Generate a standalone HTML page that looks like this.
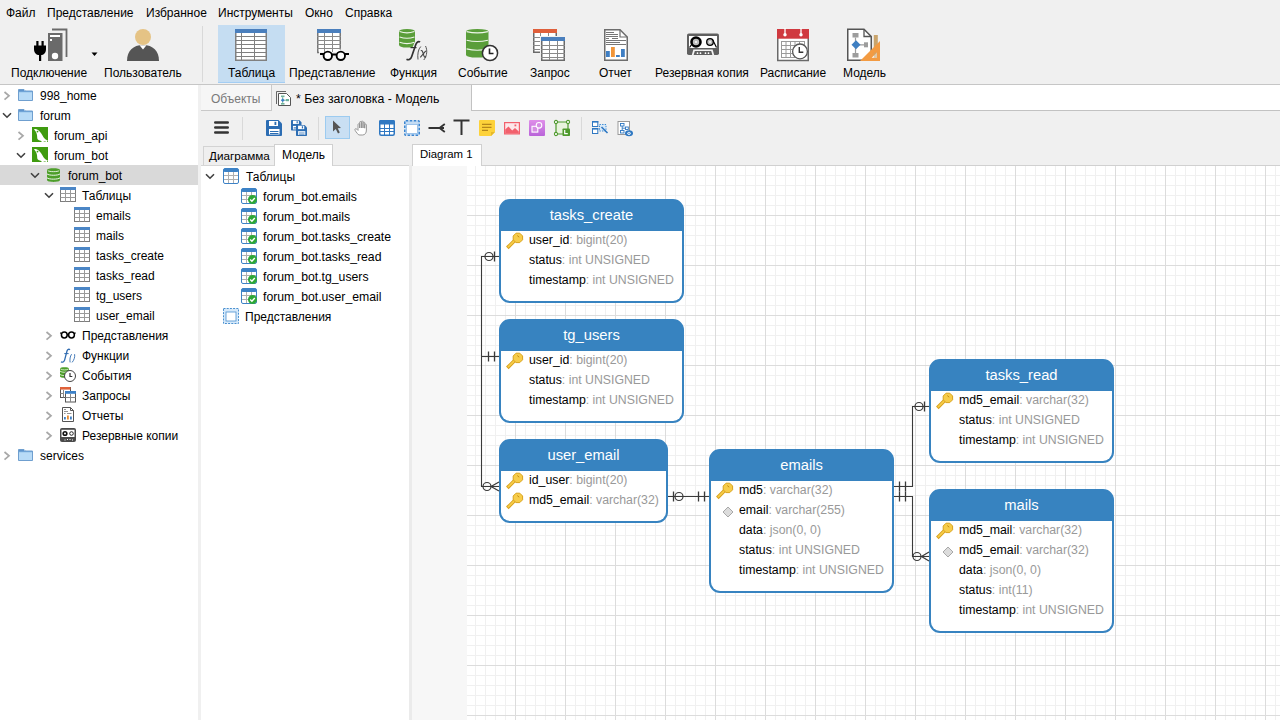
<!DOCTYPE html>
<html><head><meta charset="utf-8">
<style>
*{box-sizing:border-box}
html,body{margin:0;padding:0}
body{width:1280px;height:720px;overflow:hidden;position:relative;background:#f0f0f0;font-family:"Liberation Sans",sans-serif;font-size:12px;color:#000}
.a{position:absolute}
.t{position:absolute;white-space:nowrap;line-height:14px}
.menu .t{top:6px}
.tb .t{top:66px}
svg{position:absolute;overflow:visible}
.row{position:absolute;height:20px;line-height:20px;white-space:nowrap}
.er{position:absolute;border:2px solid #3783c0;border-radius:11px;background:#3783c0}
.er .b{position:absolute;left:0;right:0;top:30px;bottom:0;background:#fff;border-radius:0 0 9px 9px}
.er .h{position:absolute;left:0;right:0;top:0;height:30px;color:#fff;font-size:14.75px;text-align:center;line-height:28px}
.er .r{position:absolute;left:28px;height:20px;line-height:20px;font-size:12.3px;white-space:nowrap;color:#000}
.er .r i{font-style:normal;color:#999}
</style></head><body>

<!-- menu -->
<div class="menu">
<div class="t" style="left:6px">Файл</div>
<div class="t" style="left:47px">Представление</div>
<div class="t" style="left:146px">Избранное</div>
<div class="t" style="left:218px">Инструменты</div>
<div class="t" style="left:305px">Окно</div>
<div class="t" style="left:345px">Справка</div>
</div>

<!-- toolbar -->
<div class="a" style="left:218px;top:25px;width:67px;height:58px;background:#c5ddf2;border-bottom:1px solid #a3cdf3"></div>
<div class="a" style="left:202px;top:26px;width:1px;height:56px;background:#d9d9d9"></div>
<div class="tb">
<div class="t" style="left:11px">Подключение</div>
<div class="t" style="left:104px">Пользователь</div>
<div class="t" style="left:228px">Таблица</div>
<div class="t" style="left:289px">Представление</div>
<div class="t" style="left:390px">Функция</div>
<div class="t" style="left:458px">Событие</div>
<div class="t" style="left:530px">Запрос</div>
<div class="t" style="left:599px">Отчет</div>
<div class="t" style="left:655px">Резервная копия</div>
<div class="t" style="left:760px">Расписание</div>
<div class="t" style="left:843px">Модель</div>
</div>
<div class="a" style="left:0;top:84px;width:1280px;height:1px;background:#c6c6c6"></div>

<!-- left panel -->
<div class="a" style="left:0;top:85px;width:198px;height:635px;background:#fff"></div>
<div class="a" style="left:0;top:165px;width:198px;height:20px;background:#d9d9d9"></div>
<svg style="left:3px;top:91px" width="8" height="10" viewBox="0 0 8 10"><path d="M1.5 1 L6 4.8 L1.5 8.6" fill="none" stroke="#a8a8a8" stroke-width="1.7"/></svg>
<svg style="left:18px;top:88px" width="15" height="13" viewBox="0 0 15 13"><path d="M0.5 1.5 H6 L7.5 3 H14.5 V12.5 H0.5 Z" fill="#b8dbf7" stroke="#6f9fcf"/><rect x="1" y="2" width="5" height="1.5" fill="#5f95cd"/><rect x="1" y="3" width="13" height="1.2" fill="#6fa3d6"/></svg>
<div class="t" style="left:40px;top:89px;">998_home</div>
<svg style="left:2px;top:112px" width="10" height="7" viewBox="0 0 10 7"><path d="M1 1.2 L5 5.2 L9 1.2" fill="none" stroke="#404040" stroke-width="1.6"/></svg>
<svg style="left:18px;top:108px" width="15" height="13" viewBox="0 0 15 13"><path d="M0.5 1.5 H6 L7.5 3 H14.5 V12.5 H0.5 Z" fill="#b8dbf7" stroke="#6f9fcf"/><rect x="1" y="2" width="5" height="1.5" fill="#5f95cd"/><rect x="1" y="3" width="13" height="1.2" fill="#6fa3d6"/></svg>
<div class="t" style="left:40px;top:109px;">forum</div>
<svg style="left:17px;top:131px" width="8" height="10" viewBox="0 0 8 10"><path d="M1.5 1 L6 4.8 L1.5 8.6" fill="none" stroke="#a8a8a8" stroke-width="1.7"/></svg>
<svg style="left:32px;top:127px" width="16" height="15" viewBox="0 0 16 15"><rect x="0" y="0" width="16" height="15" fill="#3f9b0f"/><path d="M2 2.2 C3 1.6 4.5 2 6 3 C8.5 4.6 10 7.5 11.5 10.3 C12.5 12 14 12.8 16 13.6 L14.8 14.2 L15.6 15 H13.8 L13.2 14.3 L11 15 H9.8 C9.5 13.8 8 13.5 7 13.2 C5.8 12.8 5.2 12 5.2 10.5 C5.2 8.5 4.8 6.5 4 5 C3.4 4 2.6 3 2 2.2 Z" fill="#fff"/><circle cx="5.5" cy="4.6" r="0.9" fill="#3f9b0f"/></svg>
<div class="t" style="left:54px;top:129px;">forum_api</div>
<svg style="left:16px;top:152px" width="10" height="7" viewBox="0 0 10 7"><path d="M1 1.2 L5 5.2 L9 1.2" fill="none" stroke="#404040" stroke-width="1.6"/></svg>
<svg style="left:32px;top:147px" width="16" height="15" viewBox="0 0 16 15"><rect x="0" y="0" width="16" height="15" fill="#3f9b0f"/><path d="M2 2.2 C3 1.6 4.5 2 6 3 C8.5 4.6 10 7.5 11.5 10.3 C12.5 12 14 12.8 16 13.6 L14.8 14.2 L15.6 15 H13.8 L13.2 14.3 L11 15 H9.8 C9.5 13.8 8 13.5 7 13.2 C5.8 12.8 5.2 12 5.2 10.5 C5.2 8.5 4.8 6.5 4 5 C3.4 4 2.6 3 2 2.2 Z" fill="#fff"/><circle cx="5.5" cy="4.6" r="0.9" fill="#3f9b0f"/></svg>
<div class="t" style="left:54px;top:149px;">forum_bot</div>
<svg style="left:30px;top:172px" width="10" height="7" viewBox="0 0 10 7"><path d="M1 1.2 L5 5.2 L9 1.2" fill="none" stroke="#404040" stroke-width="1.6"/></svg>
<svg style="left:47px;top:168px" width="13" height="14" viewBox="0 0 13 14"><path d="M0 2 C0 -0.5 13 -0.5 13 2 V12 C13 14.5 0 14.5 0 12 Z" fill="#4d9e2a"/><path d="M0.8 2.6 C2 4 11 4 12.2 2.6" fill="none" stroke="#fff" stroke-width="0.9" opacity="0.9"/><path d="M0 5.9 C2 7.7 11 7.7 13 5.9" fill="none" stroke="#fff" stroke-width="0.9"/><path d="M0 9.8 C2 11.6 11 11.6 13 9.8" fill="none" stroke="#fff" stroke-width="0.9"/></svg>
<div class="t" style="left:68px;top:169px;">forum_bot</div>
<svg style="left:44px;top:192px" width="10" height="7" viewBox="0 0 10 7"><path d="M1 1.2 L5 5.2 L9 1.2" fill="none" stroke="#404040" stroke-width="1.6"/></svg>
<svg style="left:60px;top:187px" width="16" height="15" viewBox="0 0 16 15"><rect x="0.5" y="0.5" width="15" height="14" fill="#fff" stroke="#7d7d7d"/><rect x="0" y="0" width="16" height="3" fill="#4b86c6"/><path d="M5.5 3 V14.5 M10.5 3 V14.5 M0.5 6.5 H15.5 M0.5 10.5 H15.5" stroke="#9a9a9a" stroke-width="1"/></svg>
<div class="t" style="left:82px;top:189px;">Таблицы</div>
<svg style="left:74px;top:207px" width="16" height="15" viewBox="0 0 16 15"><rect x="0.5" y="0.5" width="15" height="14" fill="#fff" stroke="#7d7d7d"/><rect x="0" y="0" width="16" height="3" fill="#4b86c6"/><path d="M5.5 3 V14.5 M10.5 3 V14.5 M0.5 6.5 H15.5 M0.5 10.5 H15.5" stroke="#9a9a9a" stroke-width="1"/></svg>
<div class="t" style="left:96px;top:209px;">emails</div>
<svg style="left:74px;top:227px" width="16" height="15" viewBox="0 0 16 15"><rect x="0.5" y="0.5" width="15" height="14" fill="#fff" stroke="#7d7d7d"/><rect x="0" y="0" width="16" height="3" fill="#4b86c6"/><path d="M5.5 3 V14.5 M10.5 3 V14.5 M0.5 6.5 H15.5 M0.5 10.5 H15.5" stroke="#9a9a9a" stroke-width="1"/></svg>
<div class="t" style="left:96px;top:229px;">mails</div>
<svg style="left:74px;top:247px" width="16" height="15" viewBox="0 0 16 15"><rect x="0.5" y="0.5" width="15" height="14" fill="#fff" stroke="#7d7d7d"/><rect x="0" y="0" width="16" height="3" fill="#4b86c6"/><path d="M5.5 3 V14.5 M10.5 3 V14.5 M0.5 6.5 H15.5 M0.5 10.5 H15.5" stroke="#9a9a9a" stroke-width="1"/></svg>
<div class="t" style="left:96px;top:249px;">tasks_create</div>
<svg style="left:74px;top:267px" width="16" height="15" viewBox="0 0 16 15"><rect x="0.5" y="0.5" width="15" height="14" fill="#fff" stroke="#7d7d7d"/><rect x="0" y="0" width="16" height="3" fill="#4b86c6"/><path d="M5.5 3 V14.5 M10.5 3 V14.5 M0.5 6.5 H15.5 M0.5 10.5 H15.5" stroke="#9a9a9a" stroke-width="1"/></svg>
<div class="t" style="left:96px;top:269px;">tasks_read</div>
<svg style="left:74px;top:287px" width="16" height="15" viewBox="0 0 16 15"><rect x="0.5" y="0.5" width="15" height="14" fill="#fff" stroke="#7d7d7d"/><rect x="0" y="0" width="16" height="3" fill="#4b86c6"/><path d="M5.5 3 V14.5 M10.5 3 V14.5 M0.5 6.5 H15.5 M0.5 10.5 H15.5" stroke="#9a9a9a" stroke-width="1"/></svg>
<div class="t" style="left:96px;top:289px;">tg_users</div>
<svg style="left:74px;top:307px" width="16" height="15" viewBox="0 0 16 15"><rect x="0.5" y="0.5" width="15" height="14" fill="#fff" stroke="#7d7d7d"/><rect x="0" y="0" width="16" height="3" fill="#4b86c6"/><path d="M5.5 3 V14.5 M10.5 3 V14.5 M0.5 6.5 H15.5 M0.5 10.5 H15.5" stroke="#9a9a9a" stroke-width="1"/></svg>
<div class="t" style="left:96px;top:309px;">user_email</div>
<svg style="left:45px;top:331px" width="8" height="10" viewBox="0 0 8 10"><path d="M1.5 1 L6 4.8 L1.5 8.6" fill="none" stroke="#a8a8a8" stroke-width="1.7"/></svg>
<svg style="left:60px;top:331px" width="16" height="8" viewBox="0 0 16 8"><circle cx="4.3" cy="4" r="2.9" fill="#fff" stroke="#000" stroke-width="1.5"/><circle cx="11.5" cy="4" r="2.9" fill="#fff" stroke="#000" stroke-width="1.5"/><path d="M7 3.6 H8.8 M0.2 1.8 L1.8 2.8 M15.6 1.8 L14 2.8" stroke="#000" stroke-width="1.3"/></svg>
<div class="t" style="left:82px;top:329px;">Представления</div>
<svg style="left:45px;top:351px" width="8" height="10" viewBox="0 0 8 10"><path d="M1.5 1 L6 4.8 L1.5 8.6" fill="none" stroke="#a8a8a8" stroke-width="1.7"/></svg>
<svg style="left:60px;top:347px" width="17" height="17" viewBox="0 0 17 17"><path d="M10 2.8 C9 1.8 7.5 2.2 7 4 L4.6 13.2 C4.1 15 2.6 15.6 1 14.8" fill="none" stroke="#2f6bb0" stroke-width="1.3"/><path d="M4.3 6.6 H8.6" stroke="#2f6bb0" stroke-width="1"/><path d="M11.6 7.2 C10.1 9.2 9.6 12.5 10.1 15.4 M14.6 7.2 C15.1 10 14.1 13 12.1 15.4" fill="none" stroke="#2f6bb0" stroke-width="0.9"/></svg>
<div class="t" style="left:82px;top:349px;">Функции</div>
<svg style="left:45px;top:371px" width="8" height="10" viewBox="0 0 8 10"><path d="M1.5 1 L6 4.8 L1.5 8.6" fill="none" stroke="#a8a8a8" stroke-width="1.7"/></svg>
<svg style="left:60px;top:367px" width="16" height="16" viewBox="0 0 16 16"><g transform="translate(0,0)"><path d="M0 1.5 C0 -0.3 9 -0.3 9 1.5 V9.5 C9 11.3 0 11.3 0 9.5 Z" fill="#4d9e2a"/><path d="M0 4.2 C2 5.7 7 5.7 9 4.2 M0 7.5 C2 9.0 7 9.0 9 7.5 M0.5 2 C2 3.2 7 3.2 8.5 2" fill="none" stroke="#e8f5e0" stroke-width="0.8"/></g><circle cx="10" cy="9" r="5.5" fill="#fff" stroke="#444" stroke-width="1"/><path d="M10 6 V9.5 H12.3" fill="none" stroke="#333" stroke-width="1.2"/></svg>
<div class="t" style="left:82px;top:369px;">События</div>
<svg style="left:45px;top:391px" width="8" height="10" viewBox="0 0 8 10"><path d="M1.5 1 L6 4.8 L1.5 8.6" fill="none" stroke="#a8a8a8" stroke-width="1.7"/></svg>
<svg style="left:60px;top:387px" width="16" height="16" viewBox="0 0 16 16"><rect x="0.5" y="0.5" width="10" height="10" fill="#fff" stroke="#555"/><rect x="0" y="0" width="10.5" height="2.6" fill="#e0623a"/><path d="M3.5 3 V10.5 M0.5 6.5 H4" stroke="#888"/><rect x="5.5" y="4.5" width="10" height="10.5" fill="#fff" stroke="#555"/><rect x="5" y="4" width="11" height="2.8" fill="#3e82c8"/><path d="M10.5 7 V15 M5.5 10.5 H15.5" stroke="#888"/></svg>
<div class="t" style="left:82px;top:389px;">Запросы</div>
<svg style="left:45px;top:411px" width="8" height="10" viewBox="0 0 8 10"><path d="M1.5 1 L6 4.8 L1.5 8.6" fill="none" stroke="#a8a8a8" stroke-width="1.7"/></svg>
<svg style="left:62px;top:407px" width="12" height="15" viewBox="0 0 12 15"><path d="M0.5 0.5 H8.5 L11.5 3.5 V14.5 H0.5 Z" fill="#fff" stroke="#555"/><path d="M8.5 0.5 V3.5 H11.5" fill="none" stroke="#555"/><path d="M2 2.5 H4 M2 4.5 H6 M2 6.5 H3.5 M5 6.5 H9.5" stroke="#777" stroke-width="0.8"/><rect x="2" y="10" width="1.8" height="2.5" fill="#3f7fc4"/><rect x="5" y="8.5" width="1.8" height="4" fill="#e88b2f"/><rect x="8" y="9.5" width="1.8" height="3" fill="#3f7fc4"/></svg>
<div class="t" style="left:82px;top:409px;">Отчеты</div>
<svg style="left:45px;top:431px" width="8" height="10" viewBox="0 0 8 10"><path d="M1.5 1 L6 4.8 L1.5 8.6" fill="none" stroke="#a8a8a8" stroke-width="1.7"/></svg>
<svg style="left:60px;top:428px" width="16" height="14" viewBox="0 0 16 14"><rect x="0" y="0" width="16" height="14" rx="2" fill="#4a4a4a"/><rect x="1.5" y="1.8" width="13" height="7.2" fill="#fff"/><circle cx="5" cy="5.5" r="2.6" fill="#111"/><circle cx="5" cy="5.5" r="1" fill="#fff"/><circle cx="11.5" cy="5.5" r="1.8" fill="none" stroke="#111" stroke-width="0.9"/><path d="M4.5 12 h1 M7 11.5 h1 M9.5 11.5 h1 M12 12 h1" stroke="#fff" stroke-width="1"/></svg>
<div class="t" style="left:82px;top:429px;">Резервные копии</div>
<svg style="left:3px;top:451px" width="8" height="10" viewBox="0 0 8 10"><path d="M1.5 1 L6 4.8 L1.5 8.6" fill="none" stroke="#a8a8a8" stroke-width="1.7"/></svg>
<svg style="left:18px;top:448px" width="15" height="13" viewBox="0 0 15 13"><path d="M0.5 1.5 H6 L7.5 3 H14.5 V12.5 H0.5 Z" fill="#b8dbf7" stroke="#6f9fcf"/><rect x="1" y="2" width="5" height="1.5" fill="#5f95cd"/><rect x="1" y="3" width="13" height="1.2" fill="#6fa3d6"/></svg>
<div class="t" style="left:40px;top:449px;">services</div>


<!-- doc tabs -->
<div class="a" style="left:201px;top:85px;width:71px;height:26px;background:#f6f6f6;border-right:1px solid #c9c9c9;border-bottom:1px solid #c9c9c9"></div>
<div class="t" style="left:211px;top:92px;color:#7a7a7a">Объекты</div>
<div class="t" style="left:296px;top:92px;font-size:12.3px">* Без заголовка - Модель</div>
<div class="a" style="left:471px;top:85px;width:809px;height:26px;background:#fff;border-left:1px solid #c2c2c2;border-bottom:1px solid #c2c2c2"></div>

<!-- model toolbar -->
<div class="a" style="left:242px;top:117px;width:1px;height:23px;background:#d9d9d9"></div>
<div class="a" style="left:318px;top:117px;width:1px;height:23px;background:#d9d9d9"></div>
<div class="a" style="left:581px;top:117px;width:1px;height:23px;background:#d9d9d9"></div>
<div class="a" style="left:325px;top:116px;width:25px;height:23px;background:#c9dff3;border:1px solid #9ccbf0"></div>

<!-- sub tabs -->
<div class="a" style="left:201px;top:165px;width:208px;height:1px;background:#d6d6d6"></div>
<div class="a" style="left:203px;top:146px;width:72px;height:19px;background:#efefef;border:1px solid #d3d3d3;border-bottom:none"></div>
<div class="t" style="left:209px;top:149px;font-size:11.7px">Диаграмма</div>
<div class="a" style="left:274px;top:144px;width:59px;height:22px;background:#fff;border:1px solid #d0d0d0;border-bottom:none"></div>
<div class="t" style="left:282px;top:148px">Модель</div>
<div class="a" style="left:201px;top:166px;width:208px;height:554px;background:#fff"></div>

<div class="a" style="left:409px;top:165px;width:3px;height:555px;background:#ebebeb"></div>
<div class="a" style="left:412px;top:165px;width:55px;height:555px;background:#f7f7f7"></div>
<div class="a" style="left:412px;top:144px;width:70px;height:22px;background:#fff;border:1px solid #d0d0d0;border-bottom:none"></div>
<div class="t" style="left:420px;top:147px;font-size:11.4px">Diagram 1</div>
<div class="a" style="left:481px;top:165px;width:799px;height:1px;background:#d0d0d0"></div>

<!-- grid -->
<svg class="a" style="left:467px;top:166px" width="813" height="554">
<defs>
<pattern id="mi" x="-2" y="-1" width="10" height="10" patternUnits="userSpaceOnUse"><rect x="0" y="0" width="10" height="10" fill="#fff"/><rect x="0" y="0" width="1" height="10" fill="#f0f0f0"/><rect x="0" y="0" width="10" height="1" fill="#f0f0f0"/></pattern>
<pattern id="ma" x="-2" y="-1" width="50" height="50" patternUnits="userSpaceOnUse"><rect x="0" y="0" width="1" height="50" fill="#dcdcdc"/><rect x="0" y="0" width="50" height="1" fill="#dcdcdc"/></pattern>
</defs>
<rect width="813" height="554" fill="url(#mi)"/>
<rect width="813" height="554" fill="url(#ma)"/>
</svg>

<div class="er" style="left:499px;top:199px;width:185px;height:104px"><div class="h">tasks_create</div><div class="b"></div><div class="r" style="top:29px">user_id<i>: bigint(20)</i></div><div class="r" style="top:49px">status<i>: int UNSIGNED</i></div><div class="r" style="top:69px">timestamp<i>: int UNSIGNED</i></div></div>
<svg style="left:507px;top:232px" width="17" height="17" viewBox="0 0 17 17"><path d="M1.6 14.6 L7.6 8.6" stroke="#d9a21c" stroke-width="3.6" stroke-linecap="square"/><path d="M1.6 14.6 L7.6 8.6" stroke="#f7cd4a" stroke-width="1.8" stroke-linecap="square"/><path d="M9 1.2 H12.8 L15.6 4 V7.8 L12.8 10.6 H9 L6.2 7.8 V4 Z" fill="#f7cd4a" stroke="#d9a21c" stroke-width="1"/><path d="M10.3 3.6 L12.2 5.2" stroke="#c48c14" stroke-width="1"/></svg>
<div class="er" style="left:499px;top:319px;width:185px;height:104px"><div class="h">tg_users</div><div class="b"></div><div class="r" style="top:29px">user_id<i>: bigint(20)</i></div><div class="r" style="top:49px">status<i>: int UNSIGNED</i></div><div class="r" style="top:69px">timestamp<i>: int UNSIGNED</i></div></div>
<svg style="left:507px;top:352px" width="17" height="17" viewBox="0 0 17 17"><path d="M1.6 14.6 L7.6 8.6" stroke="#d9a21c" stroke-width="3.6" stroke-linecap="square"/><path d="M1.6 14.6 L7.6 8.6" stroke="#f7cd4a" stroke-width="1.8" stroke-linecap="square"/><path d="M9 1.2 H12.8 L15.6 4 V7.8 L12.8 10.6 H9 L6.2 7.8 V4 Z" fill="#f7cd4a" stroke="#d9a21c" stroke-width="1"/><path d="M10.3 3.6 L12.2 5.2" stroke="#c48c14" stroke-width="1"/></svg>
<div class="er" style="left:499px;top:439px;width:169px;height:84px"><div class="h">user_email</div><div class="b"></div><div class="r" style="top:29px">id_user<i>: bigint(20)</i></div><div class="r" style="top:49px">md5_email<i>: varchar(32)</i></div></div>
<svg style="left:507px;top:472px" width="17" height="17" viewBox="0 0 17 17"><path d="M1.6 14.6 L7.6 8.6" stroke="#d9a21c" stroke-width="3.6" stroke-linecap="square"/><path d="M1.6 14.6 L7.6 8.6" stroke="#f7cd4a" stroke-width="1.8" stroke-linecap="square"/><path d="M9 1.2 H12.8 L15.6 4 V7.8 L12.8 10.6 H9 L6.2 7.8 V4 Z" fill="#f7cd4a" stroke="#d9a21c" stroke-width="1"/><path d="M10.3 3.6 L12.2 5.2" stroke="#c48c14" stroke-width="1"/></svg>
<svg style="left:507px;top:492px" width="17" height="17" viewBox="0 0 17 17"><path d="M1.6 14.6 L7.6 8.6" stroke="#d9a21c" stroke-width="3.6" stroke-linecap="square"/><path d="M1.6 14.6 L7.6 8.6" stroke="#f7cd4a" stroke-width="1.8" stroke-linecap="square"/><path d="M9 1.2 H12.8 L15.6 4 V7.8 L12.8 10.6 H9 L6.2 7.8 V4 Z" fill="#f7cd4a" stroke="#d9a21c" stroke-width="1"/><path d="M10.3 3.6 L12.2 5.2" stroke="#c48c14" stroke-width="1"/></svg>
<div class="er" style="left:709px;top:449px;width:185px;height:144px"><div class="h">emails</div><div class="b"></div><div class="r" style="top:29px">md5<i>: varchar(32)</i></div><div class="r" style="top:49px">email<i>: varchar(255)</i></div><div class="r" style="top:69px">data<i>: json(0, 0)</i></div><div class="r" style="top:89px">status<i>: int UNSIGNED</i></div><div class="r" style="top:109px">timestamp<i>: int UNSIGNED</i></div></div>
<svg style="left:717px;top:482px" width="17" height="17" viewBox="0 0 17 17"><path d="M1.6 14.6 L7.6 8.6" stroke="#d9a21c" stroke-width="3.6" stroke-linecap="square"/><path d="M1.6 14.6 L7.6 8.6" stroke="#f7cd4a" stroke-width="1.8" stroke-linecap="square"/><path d="M9 1.2 H12.8 L15.6 4 V7.8 L12.8 10.6 H9 L6.2 7.8 V4 Z" fill="#f7cd4a" stroke="#d9a21c" stroke-width="1"/><path d="M10.3 3.6 L12.2 5.2" stroke="#c48c14" stroke-width="1"/></svg>
<svg style="left:722px;top:506px" width="12" height="12" viewBox="0 0 12 12"><path d="M6 1 L11 6 L6 11 L1 6 Z" fill="#dcdcdc" stroke="#a8a8a8"/></svg>
<div class="er" style="left:929px;top:359px;width:185px;height:104px"><div class="h">tasks_read</div><div class="b"></div><div class="r" style="top:29px">md5_email<i>: varchar(32)</i></div><div class="r" style="top:49px">status<i>: int UNSIGNED</i></div><div class="r" style="top:69px">timestamp<i>: int UNSIGNED</i></div></div>
<svg style="left:937px;top:392px" width="17" height="17" viewBox="0 0 17 17"><path d="M1.6 14.6 L7.6 8.6" stroke="#d9a21c" stroke-width="3.6" stroke-linecap="square"/><path d="M1.6 14.6 L7.6 8.6" stroke="#f7cd4a" stroke-width="1.8" stroke-linecap="square"/><path d="M9 1.2 H12.8 L15.6 4 V7.8 L12.8 10.6 H9 L6.2 7.8 V4 Z" fill="#f7cd4a" stroke="#d9a21c" stroke-width="1"/><path d="M10.3 3.6 L12.2 5.2" stroke="#c48c14" stroke-width="1"/></svg>
<div class="er" style="left:929px;top:489px;width:185px;height:144px"><div class="h">mails</div><div class="b"></div><div class="r" style="top:29px">md5_mail<i>: varchar(32)</i></div><div class="r" style="top:49px">md5_email<i>: varchar(32)</i></div><div class="r" style="top:69px">data<i>: json(0, 0)</i></div><div class="r" style="top:89px">status<i>: int(11)</i></div><div class="r" style="top:109px">timestamp<i>: int UNSIGNED</i></div></div>
<svg style="left:937px;top:522px" width="17" height="17" viewBox="0 0 17 17"><path d="M1.6 14.6 L7.6 8.6" stroke="#d9a21c" stroke-width="3.6" stroke-linecap="square"/><path d="M1.6 14.6 L7.6 8.6" stroke="#f7cd4a" stroke-width="1.8" stroke-linecap="square"/><path d="M9 1.2 H12.8 L15.6 4 V7.8 L12.8 10.6 H9 L6.2 7.8 V4 Z" fill="#f7cd4a" stroke="#d9a21c" stroke-width="1"/><path d="M10.3 3.6 L12.2 5.2" stroke="#c48c14" stroke-width="1"/></svg>
<svg style="left:942px;top:546px" width="12" height="12" viewBox="0 0 12 12"><path d="M6 1 L11 6 L6 11 L1 6 Z" fill="#dcdcdc" stroke="#a8a8a8"/></svg>
<svg style="left:0;top:0" width="1280" height="720"><polyline points="499,256.5 481.5,256.5 481.5,486.5 499,486.5" fill="none" stroke="#3a3a3a" stroke-width="1.1"/><polyline points="481.5,356.5 499,356.5" fill="none" stroke="#3a3a3a" stroke-width="1.1"/><circle cx="489" cy="256.5" r="4" fill="none" stroke="#3a3a3a" stroke-width="1.2"/><path d="M494.5 251.5 V261.5" stroke="#3a3a3a" stroke-width="1.3"/><path d="M488.5 351.5 V361.5" stroke="#3a3a3a" stroke-width="1.3"/><path d="M494.5 351.5 V361.5" stroke="#3a3a3a" stroke-width="1.3"/><circle cx="487" cy="486.5" r="4" fill="none" stroke="#3a3a3a" stroke-width="1.2"/><path d="M499 482.0 L491 486.5 L499 491.0" fill="none" stroke="#3a3a3a" stroke-width="1.2"/><polyline points="668,496.5 709,496.5" fill="none" stroke="#3a3a3a" stroke-width="1.1"/><path d="M673.5 491.5 V501.5" stroke="#3a3a3a" stroke-width="1.3"/><circle cx="679" cy="496.5" r="4" fill="none" stroke="#3a3a3a" stroke-width="1.2"/><path d="M698.5 491.5 V501.5" stroke="#3a3a3a" stroke-width="1.3"/><path d="M704.5 491.5 V501.5" stroke="#3a3a3a" stroke-width="1.3"/><polyline points="894,486.5 912.5,486.5 912.5,406.5 929,406.5" fill="none" stroke="#3a3a3a" stroke-width="1.1"/><path d="M899.5 481.5 V491.5" stroke="#3a3a3a" stroke-width="1.3"/><path d="M905.5 481.5 V491.5" stroke="#3a3a3a" stroke-width="1.3"/><circle cx="919" cy="406.5" r="4" fill="none" stroke="#3a3a3a" stroke-width="1.2"/><path d="M924.5 401.5 V411.5" stroke="#3a3a3a" stroke-width="1.3"/><polyline points="894,496.5 912.5,496.5 912.5,556.5 929,556.5" fill="none" stroke="#3a3a3a" stroke-width="1.1"/><path d="M899.5 491.5 V501.5" stroke="#3a3a3a" stroke-width="1.3"/><path d="M905.5 491.5 V501.5" stroke="#3a3a3a" stroke-width="1.3"/><circle cx="917" cy="556.5" r="4" fill="none" stroke="#3a3a3a" stroke-width="1.2"/><path d="M929 552.0 L921.5 556.5 L929 561.0" fill="none" stroke="#3a3a3a" stroke-width="1.2"/></svg>

<svg style="left:205px;top:173px" width="10" height="7" viewBox="0 0 10 7"><path d="M1 1.2 L5 5.2 L9 1.2" fill="none" stroke="#404040" stroke-width="1.6"/></svg>
<svg style="left:223px;top:168px" width="16" height="16" viewBox="0 0 16 16"><rect x="0.5" y="0.5" width="15" height="15" rx="1.5" fill="#fff" stroke="#3d82c6"/><rect x="0.5" y="0.5" width="15" height="3.5" rx="1.5" fill="#3d82c6"/><path d="M5.5 4 V15 M10.5 4 V15 M1 7.5 H15 M1 11.5 H15" stroke="#b0b0b0" stroke-width="1"/></svg>
<div class="t" style="left:246px;top:170px;">Таблицы</div>
<svg style="left:241px;top:188px" width="16" height="16" viewBox="0 0 16 16"><rect x="0.5" y="0.5" width="15" height="15" rx="1.5" fill="#fff" stroke="#3d82c6"/><rect x="0.5" y="0.5" width="15" height="3.5" rx="1.5" fill="#3d82c6"/><path d="M5.5 4 V15 M10.5 4 V15 M1 7.5 H15 M1 11.5 H15" stroke="#b0b0b0" stroke-width="1"/><circle cx="11.5" cy="11.5" r="4.5" fill="#2ea836"/><path d="M9.2 11.6 L10.9 13.2 L13.8 10.1" fill="none" stroke="#fff" stroke-width="1.4"/></svg>
<div class="t" style="left:263px;top:190px;font-size:12.25px;">forum_bot.emails</div>
<svg style="left:241px;top:208px" width="16" height="16" viewBox="0 0 16 16"><rect x="0.5" y="0.5" width="15" height="15" rx="1.5" fill="#fff" stroke="#3d82c6"/><rect x="0.5" y="0.5" width="15" height="3.5" rx="1.5" fill="#3d82c6"/><path d="M5.5 4 V15 M10.5 4 V15 M1 7.5 H15 M1 11.5 H15" stroke="#b0b0b0" stroke-width="1"/><circle cx="11.5" cy="11.5" r="4.5" fill="#2ea836"/><path d="M9.2 11.6 L10.9 13.2 L13.8 10.1" fill="none" stroke="#fff" stroke-width="1.4"/></svg>
<div class="t" style="left:263px;top:210px;font-size:12.25px;">forum_bot.mails</div>
<svg style="left:241px;top:228px" width="16" height="16" viewBox="0 0 16 16"><rect x="0.5" y="0.5" width="15" height="15" rx="1.5" fill="#fff" stroke="#3d82c6"/><rect x="0.5" y="0.5" width="15" height="3.5" rx="1.5" fill="#3d82c6"/><path d="M5.5 4 V15 M10.5 4 V15 M1 7.5 H15 M1 11.5 H15" stroke="#b0b0b0" stroke-width="1"/><circle cx="11.5" cy="11.5" r="4.5" fill="#2ea836"/><path d="M9.2 11.6 L10.9 13.2 L13.8 10.1" fill="none" stroke="#fff" stroke-width="1.4"/></svg>
<div class="t" style="left:263px;top:230px;font-size:12.25px;">forum_bot.tasks_create</div>
<svg style="left:241px;top:248px" width="16" height="16" viewBox="0 0 16 16"><rect x="0.5" y="0.5" width="15" height="15" rx="1.5" fill="#fff" stroke="#3d82c6"/><rect x="0.5" y="0.5" width="15" height="3.5" rx="1.5" fill="#3d82c6"/><path d="M5.5 4 V15 M10.5 4 V15 M1 7.5 H15 M1 11.5 H15" stroke="#b0b0b0" stroke-width="1"/><circle cx="11.5" cy="11.5" r="4.5" fill="#2ea836"/><path d="M9.2 11.6 L10.9 13.2 L13.8 10.1" fill="none" stroke="#fff" stroke-width="1.4"/></svg>
<div class="t" style="left:263px;top:250px;font-size:12.25px;">forum_bot.tasks_read</div>
<svg style="left:241px;top:268px" width="16" height="16" viewBox="0 0 16 16"><rect x="0.5" y="0.5" width="15" height="15" rx="1.5" fill="#fff" stroke="#3d82c6"/><rect x="0.5" y="0.5" width="15" height="3.5" rx="1.5" fill="#3d82c6"/><path d="M5.5 4 V15 M10.5 4 V15 M1 7.5 H15 M1 11.5 H15" stroke="#b0b0b0" stroke-width="1"/><circle cx="11.5" cy="11.5" r="4.5" fill="#2ea836"/><path d="M9.2 11.6 L10.9 13.2 L13.8 10.1" fill="none" stroke="#fff" stroke-width="1.4"/></svg>
<div class="t" style="left:263px;top:270px;font-size:12.25px;">forum_bot.tg_users</div>
<svg style="left:241px;top:288px" width="16" height="16" viewBox="0 0 16 16"><rect x="0.5" y="0.5" width="15" height="15" rx="1.5" fill="#fff" stroke="#3d82c6"/><rect x="0.5" y="0.5" width="15" height="3.5" rx="1.5" fill="#3d82c6"/><path d="M5.5 4 V15 M10.5 4 V15 M1 7.5 H15 M1 11.5 H15" stroke="#b0b0b0" stroke-width="1"/><circle cx="11.5" cy="11.5" r="4.5" fill="#2ea836"/><path d="M9.2 11.6 L10.9 13.2 L13.8 10.1" fill="none" stroke="#fff" stroke-width="1.4"/></svg>
<div class="t" style="left:263px;top:290px;font-size:12.25px;">forum_bot.user_email</div>
<svg style="left:223px;top:308px" width="16" height="16" viewBox="0 0 16 16"><rect x="0.5" y="0.5" width="15" height="15" fill="#d6e9fa" stroke="#4a90d0" stroke-dasharray="2 1.2"/><rect x="3" y="4" width="10" height="9" fill="#fff" stroke="#4a90d0" stroke-width="0.8"/></svg>
<div class="t" style="left:245px;top:310px;">Представления</div>
<svg style="left:33px;top:28px" width="36" height="36" viewBox="0 0 36 36"><path d="M19 1.5 H33.5 V29" fill="none" stroke="#6a6a6a" stroke-width="1.8"/><rect x="15" y="5" width="14.5" height="28" fill="#6a6a6a"/><rect x="17" y="7" width="10" height="2" fill="#fff"/><rect x="17" y="11" width="2" height="2" fill="#fff"/><circle cx="22" cy="28" r="3.2" fill="#fff"/><rect x="3.3" y="13" width="2.2" height="5" fill="#000"/><rect x="8.5" y="13" width="2.2" height="5" fill="#000"/><path d="M1 17.5 H13 V21 C13 25 10.5 27 8 27 H6 C3.5 27 1 25 1 21 Z" fill="#000"/><rect x="6" y="26" width="2.2" height="7" fill="#000"/></svg>
<svg style="left:91px;top:52px" width="7" height="5" viewBox="0 0 7 5"><path d="M0.5 0.5 H6.5 L3.5 4 Z" fill="#000"/></svg>
<svg style="left:126px;top:28px" width="34" height="34" viewBox="0 0 34 34"><circle cx="17" cy="9" r="8" fill="#e5c385"/><path d="M1 33 C1 23 7 17 17 17 C27 17 33 23 33 33 Z" fill="#555"/><path d="M13.5 17.3 L17 21.5 L20.5 17.3 Z" fill="#fff"/></svg>
<svg style="left:202px;top:26px" width="1" height="56" viewBox="0 0 1 56"></svg>
<svg style="left:235px;top:29px" width="32" height="32" viewBox="0 0 32 32"><rect x="0" y="0" width="32" height="32" fill="#808080"/><rect x="1.5" y="4" width="29" height="26.5" fill="#fff"/><rect x="0" y="0" width="32" height="4" fill="#4a7fbd"/><path d="M0 7.5 H32 M0 11.5 H32 M0 15.5 H32 M0 19.5 H32 M0 23.5 H32 M0 27.5 H32 M6.5 4 V32 M19.5 4 V32 " stroke="#808080" stroke-width="1"/></svg>
<svg style="left:317px;top:29px" width="34" height="34" viewBox="0 0 34 34"><rect x="0" y="0" width="24" height="4" fill="#4a7fbd"/><rect x="0.5" y="4" width="23" height="19" fill="#fff"/><path d="M0.75 4 V23.5 H2 M23.25 4 V20.5" fill="none" stroke="#777" stroke-width="1.5"/><path d="M0 7.5 H24 M0 11.5 H24 M0 15.5 H24 M0 19.5 H24 M7.5 4 V23 M15.5 4 V23" stroke="#8a8a8a" stroke-width="1"/><rect x="2.5" y="21" width="31" height="11" fill="#f0f0f0" opacity="0.0"/><circle cx="10.8" cy="26.8" r="4.2" fill="#fff" stroke="#000" stroke-width="1.9"/><circle cx="23.8" cy="26.8" r="4.2" fill="#fff" stroke="#000" stroke-width="1.9"/><path d="M14.8 25.6 H19.8 M3 25 H7 M28 25 H32" stroke="#000" stroke-width="2"/></svg>
<svg style="left:399px;top:29px" width="34" height="33" viewBox="0 0 34 33"><path d="M0 2.8 Q0 0 8.0 0 Q16 0 16 2.8 V15.8 Q16 18.6 8.0 18.6 Q0 18.6 0 15.8 Z" fill="#5a9e3a"/><path d="M0.6 2.6 Q8.0 5.2 15.4 2.6" fill="none" stroke="#eef6ea" stroke-width="1.1"/><path d="M0.6 7.9 Q8.0 10.5 15.4 7.9" fill="none" stroke="#eef6ea" stroke-width="1.1"/><path d="M0.6 13.3 Q8.0 15.9 15.4 13.3" fill="none" stroke="#eef6ea" stroke-width="1.1"/><path d="M21 13.2 C20 12.2 17.8 12.6 16.8 15.5 L12.7 27.5 C11.8 30.2 9.8 31.5 7.5 30.3" fill="none" stroke="#f0f0f0" stroke-width="4"/><path d="M21 13.2 C20 12.2 17.8 12.6 16.8 15.5 L12.7 27.5 C11.8 30.2 9.8 31.5 7.5 30.3" fill="none" stroke="#333" stroke-width="1.7"/><path d="M11.5 18.6 H17.5" stroke="#333" stroke-width="1.2"/><path d="M21.8 17.5 C19.2 20 18.3 25.5 19 30.5 M26.5 17 C28.5 21 28.2 26.5 24.8 31" fill="none" stroke="#555" stroke-width="1"/><path d="M21.8 21.8 C23 21 23.5 22 24 24 L25 27 C25.5 28.3 26 28.5 27 27.5 M26.8 21.8 L21.3 28.3" fill="none" stroke="#444" stroke-width="1.1"/></svg>
<svg style="left:466px;top:29px" width="34" height="34" viewBox="0 0 34 34"><path d="M0 2.8 Q0 0 11.25 0 Q22.5 0 22.5 2.8 V25.7 Q22.5 28.5 11.25 28.5 Q0 28.5 0 25.7 Z" fill="#5a9e3a"/><path d="M0.6 2.6 Q11.25 5.2 21.9 2.6" fill="none" stroke="#eef6ea" stroke-width="1.1"/><path d="M0.6 11.2 Q11.25 13.8 21.9 11.2" fill="none" stroke="#eef6ea" stroke-width="1.1"/><path d="M0.6 19.9 Q11.25 22.5 21.9 19.9" fill="none" stroke="#eef6ea" stroke-width="1.1"/><circle cx="24" cy="24" r="7.6" fill="#fff" stroke="#333" stroke-width="1.5"/><path d="M23.5 19.5 V24.5 H27.5" fill="none" stroke="#222" stroke-width="1.6"/></svg>
<svg style="left:532px;top:29px" width="34" height="33" viewBox="0 0 34 33"><g transform="translate(1,0)"><rect x="0" y="0" width="24" height="24" fill="#fff"/><rect x="0" y="0" width="24" height="4" fill="#df5f3b"/><path d="M0.75 4 V23.25 H23.25 V4" fill="none" stroke="#6a6a6a" stroke-width="1.5"/><path d="M0 8.5 H24 M0 12.5 H24 M0 16.5 H24 M0 20.5 H24 M7.5 4 V23 M15.5 4 V23" stroke="#8a8a8a" stroke-width="1"/></g><rect x="8" y="7" width="26" height="26" fill="#f0f0f0"/><g transform="translate(9,8)"><rect x="0" y="0" width="24" height="24" fill="#fff"/><rect x="0" y="0" width="24" height="4" fill="#4a7fbd"/><path d="M0.75 4 V23.25 H23.25 V4" fill="none" stroke="#6a6a6a" stroke-width="1.5"/><path d="M0 8.5 H24 M0 12.5 H24 M0 16.5 H24 M0 20.5 H24 M8.5 4 V23 M16.5 4 V23" stroke="#8a8a8a" stroke-width="1"/></g></svg>
<svg style="left:604px;top:29px" width="25" height="33" viewBox="0 0 25 33"><path d="M0.75 0.75 H16 L23.25 8 V31.25 H0.75 Z" fill="#fff" stroke="#6d6d6d" stroke-width="1.5"/><path d="M16 0.75 V8 H23.25" fill="none" stroke="#6d6d6d" stroke-width="1.2"/><path d="M2 3.5 H10 M2 5.5 H14 M2 7.5 H14 M2 9.5 H5 M8 9.5 H14 M2 11.5 H22 M2 13.5 H16 M2 15.5 H22" stroke="#666" stroke-width="0.9"/><rect x="2" y="22" width="3.8" height="6" fill="#3f7fc4"/><rect x="7" y="18" width="3.8" height="10" fill="#f0953a"/><rect x="12" y="26" width="3.8" height="2" fill="#3f7fc4"/><rect x="17" y="20" width="3.8" height="8" fill="#3f7fc4"/></svg>
<svg style="left:687px;top:33px" width="33" height="23" viewBox="0 0 33 23"><rect x="0" y="0.5" width="32" height="21.5" rx="1.8" fill="#5f5f5f"/><rect x="2" y="3" width="28" height="12" fill="#fff"/><circle cx="9" cy="9" r="4.5" fill="#bdbdbd" stroke="#000" stroke-width="2.6"/><circle cx="9" cy="9" r="1" fill="#fff"/><circle cx="23" cy="9" r="3.3" fill="#bdbdbd" stroke="#000" stroke-width="1.3"/><circle cx="23" cy="9" r="0.9" fill="#fff"/><path d="M2.5 14.5 L5 11 M25.8 7 L29.5 14.5" stroke="#000" stroke-width="1.2"/><path d="M4.8 22 L6.4 16.5 H25.6 L27.2 22 Z" fill="#f4f4f4"/><path d="M6.6 22 L7.8 18 H24.2 L25.4 22 Z" fill="#5f5f5f"/><circle cx="10.5" cy="20.2" r="0.85" fill="#fff"/><circle cx="13.5" cy="20.2" r="0.85" fill="#fff"/><circle cx="18.5" cy="20.2" r="0.85" fill="#fff"/><circle cx="21.5" cy="20.2" r="0.85" fill="#fff"/></svg>
<svg style="left:777px;top:28px" width="33" height="34" viewBox="0 0 33 34"><rect x="0.75" y="3" width="30.5" height="29.5" fill="#fff" stroke="#6a6a6a" stroke-width="1.5"/><rect x="0" y="1" width="32" height="9.7" fill="#d0393f"/><circle cx="8" cy="6.8" r="1.7" fill="#fff"/><circle cx="24" cy="6.8" r="1.7" fill="#fff"/><path d="M8 0 V6 M24 0 V6" stroke="#fff" stroke-width="1.3"/><rect x="4.5" y="13.5" width="23" height="16" fill="none" stroke="#9a9a9a" stroke-width="1"/><path d="M9 13.5 V29.5 M13.5 13.5 V29.5 M18 13.5 V29.5 M22.5 13.5 V29.5 M4.5 17.5 H27.5 M4.5 21.5 H27.5 M4.5 25.5 H27.5" stroke="#9a9a9a" stroke-width="1"/><circle cx="23" cy="23.4" r="7.4" fill="#fff" stroke="#555" stroke-width="1.3"/><path d="M22.3 19 V24.2 H26.3" fill="none" stroke="#333" stroke-width="1.4"/></svg>
<svg style="left:847px;top:28px" width="34" height="34" viewBox="0 0 34 34"><path d="M0.75 1.25 H17 L24.25 8.5 V32.25 H0.75 Z" fill="#fff" stroke="#555" stroke-width="1.5"/><path d="M17 1.25 V8.5 H24.25" fill="none" stroke="#555" stroke-width="1.3"/><rect x="5.5" y="5" width="6" height="4.5" fill="#9d9d9d"/><rect x="5.5" y="25" width="6" height="4.5" fill="#9d9d9d"/><rect x="17" y="14.3" width="4" height="5" fill="#9d9d9d"/><path d="M8.5 9.5 V25 M9 16.8 H17" stroke="#9d9d9d" stroke-width="1.2"/><path d="M9 12.3 L13.5 16.8 L9 21.3 L4.5 16.8 Z" fill="#3f7fc2"/><rect x="26.8" y="7" width="4" height="22" fill="#c9a46c"/><path d="M33 13 V33 H13 Z" fill="#f39b42"/><path d="M30 24.5 V29.8 H24.7 Z" fill="#fff"/><rect x="26.8" y="24.5" width="3.2" height="5.3" fill="#c9a46c" opacity="0.6"/></svg>
<svg style="left:276px;top:91px" width="16" height="16" viewBox="0 0 16 16"><path d="M0.5 13 V0.5 H10" fill="none" stroke="#666" stroke-width="1"/><path d="M2.5 2.5 H10.5 L14.5 6.5 V14.5 H2.5 Z" fill="#fff" stroke="#555" stroke-width="1"/><rect x="5" y="4.5" width="3.5" height="1.6" fill="#6fb29a"/><rect x="5" y="12" width="3.5" height="1.6" fill="#6fb29a"/><rect x="10" y="8" width="3" height="2.2" fill="#6fb29a"/><path d="M6.7 6 V12 M6.7 9.2 H10" stroke="#6fb29a" stroke-width="0.9"/><path d="M6.7 7.3 L8.6 9.2 L6.7 11.1 L4.8 9.2 Z" fill="#3a7fc8"/></svg>
<svg style="left:214px;top:121px" width="15" height="14" viewBox="0 0 15 14"><path d="M1.3 1.5 H13.7 M1.3 6.5 H13.7 M1.3 11.5 H13.7" stroke="#333" stroke-width="2.6" stroke-linecap="round"/></svg>
<svg style="left:242px;top:117px" width="1" height="23" viewBox="0 0 1 23"></svg>
<svg style="left:266px;top:120px" width="16" height="16" viewBox="0 0 16 16"><g transform="translate(0,0) scale(1.0)"><path d="M0 1 Q0 0 1 0 H12.5 L16 3.5 V15 Q16 16 15 16 H1 Q0 16 0 15 Z" fill="#2c6db3"/><rect x="3" y="1" width="9" height="5" fill="#fff"/><rect x="8.5" y="1.8" width="1.8" height="3.2" fill="#2c6db3"/><rect x="3" y="9" width="10.5" height="5.5" fill="#fff"/><path d="M4 11.5 H12.5 M4 13.5 H12.5" stroke="#2c6db3" stroke-width="1"/></g></svg>
<svg style="left:291px;top:120px" width="17" height="17" viewBox="0 0 17 17"><g transform="translate(0,0) scale(0.65625)"><path d="M0 1 Q0 0 1 0 H12.5 L16 3.5 V15 Q16 16 15 16 H1 Q0 16 0 15 Z" fill="#2c6db3"/><rect x="3" y="1" width="9" height="5" fill="#fff"/><rect x="8.5" y="1.8" width="1.8" height="3.2" fill="#2c6db3"/><rect x="3" y="9" width="10.5" height="5.5" fill="#fff"/><path d="M4 11.5 H12.5 M4 13.5 H12.5" stroke="#2c6db3" stroke-width="1"/></g><g transform="translate(5,5) scale(0.6875)"><path d="M0 1 Q0 0 1 0 H12.5 L16 3.5 V15 Q16 16 15 16 H1 Q0 16 0 15 Z" fill="#2c6db3"/><rect x="3" y="1" width="9" height="5" fill="#fff"/><rect x="8.5" y="1.8" width="1.8" height="3.2" fill="#2c6db3"/><rect x="3" y="9" width="10.5" height="5.5" fill="#fff"/><path d="M4 11.5 H12.5 M4 13.5 H12.5" stroke="#2c6db3" stroke-width="1"/></g></svg>
<svg style="left:332px;top:120px" width="10" height="15" viewBox="0 0 10 15"><path d="M1 0.5 L1 11.5 L3.8 9 L6 13.5 L7.8 12.6 L5.7 8.3 L9 8 Z" fill="#555"/></svg>
<svg style="left:354px;top:120px" width="16" height="16" viewBox="0 0 16 16"><path d="M4.2 14.5 C3 13 1 10.8 0.9 9.6 C0.8 8.6 2 8.4 3 9.4 L4 10.4 V4.5 C4 3.5 5.6 3.5 5.6 4.5 V8 V2.3 C5.6 1.3 7.3 1.3 7.3 2.3 V8 V1.8 C7.3 0.8 9 0.8 9 1.8 V8 V2.8 C9 1.8 10.7 1.8 10.7 2.8 V8.2 V4.8 C10.7 3.8 12.4 3.8 12.4 4.8 V10 C12.4 13 11 15 8.5 15 H6 C5.3 15 4.7 14.9 4.2 14.5 Z" fill="#fff" stroke="#8c8c8c" stroke-width="0.9"/></svg>
<svg style="left:379px;top:120px" width="16" height="16" viewBox="0 0 16 16"><rect x="0.75" y="0.75" width="14.5" height="14.5" rx="1.5" fill="#fff" stroke="#2f78c2" stroke-width="1.5"/><rect x="0" y="0" width="16" height="4.5" rx="1.5" fill="#2f78c2"/><path d="M5.5 4 V15 M10.5 4 V15 M1 8.5 H15 M1 11.5 H15" stroke="#2f78c2" stroke-width="1"/></svg>
<svg style="left:404px;top:120px" width="16" height="16" viewBox="0 0 16 16"><rect x="0.75" y="0.75" width="14.5" height="14.5" rx="1" fill="#c4dcf4" stroke="#3b85d0" stroke-width="1.5" stroke-dasharray="2.5 1.5"/><rect x="2.5" y="4.5" width="11" height="9" fill="#fff" stroke="#8ab8e6" stroke-width="0.8"/></svg>
<svg style="left:428px;top:123px" width="18" height="10" viewBox="0 0 18 10"><path d="M0.5 5 H16 M16.8 1 L11.5 5 L16.8 9" fill="none" stroke="#333" stroke-width="1.8"/></svg>
<svg style="left:453px;top:119px" width="17" height="16" viewBox="0 0 17 16"><path d="M0.5 1.5 H16.5 M8.5 1.5 V16" stroke="#333" stroke-width="2"/></svg>
<svg style="left:479px;top:120px" width="16" height="16" viewBox="0 0 16 16"><path d="M1 0 H15 Q16 0 16 1 V12 L12 16 H1 Q0 16 0 15 V1 Q0 0 1 0 Z" fill="#fdd23a"/><path d="M3 4.3 H12.5 M3 7.3 H12.5 M3 10.3 H9" stroke="#9a6a10" stroke-width="0.9"/><path d="M12 16 V12 H16 Z" fill="#e6b92a"/></svg>
<svg style="left:504px;top:122px" width="16" height="13" viewBox="0 0 16 13"><rect x="0" y="0" width="16" height="12.5" fill="#f2616d"/><rect x="1.2" y="1.2" width="13.6" height="10" fill="#fde8ea"/><path d="M1.2 11.2 V7.5 L4.5 4.5 L8.2 8.5 L11 6 L14.8 9.5 V11.2 Z" fill="#f2616d"/><rect x="10.5" y="2.5" width="1.8" height="1.8" fill="#f2616d"/></svg>
<svg style="left:529px;top:120px" width="16" height="16" viewBox="0 0 16 16"><defs><linearGradient id="pg" x1="0" y1="0" x2="0" y2="1"><stop offset="0" stop-color="#df8fe9"/><stop offset="1" stop-color="#b964d9"/></linearGradient></defs><rect x="0" y="0" width="16" height="16" rx="1" fill="url(#pg)"/><rect x="3" y="6.3" width="5.8" height="5.8" fill="#d58ee3" stroke="#fff" stroke-width="1.1"/><circle cx="10" cy="5.3" r="2.8" fill="#d58ee3" stroke="#fff" stroke-width="1.1"/></svg>
<svg style="left:554px;top:120px" width="16" height="16" viewBox="0 0 16 16"><rect x="2" y="2" width="12" height="12" fill="#e8f3dd"/><path d="M2 2 H14 V14 H2 Z" fill="none" stroke="#4f9a2e" stroke-width="1.2"/><circle cx="2" cy="2" r="1.6" fill="#fff" stroke="#4f9a2e" stroke-width="1.1"/><circle cx="14" cy="2" r="1.6" fill="#fff" stroke="#4f9a2e" stroke-width="1.1"/><circle cx="2" cy="14" r="1.6" fill="#fff" stroke="#4f9a2e" stroke-width="1.1"/><rect x="8.5" y="8.5" width="7.5" height="7.5" rx="0.8" fill="#4f9a2e"/><path d="M10.7 10 V13.6 H13.8" fill="none" stroke="#fff" stroke-width="1.2"/></svg>
<svg style="left:592px;top:121px" width="17" height="13" viewBox="0 0 17 13"><rect x="0.5" y="0.5" width="5.3" height="5" fill="#fff" stroke="#2f78c2" stroke-width="1"/><rect x="0" y="0" width="6.3" height="1.6" fill="#2f78c2"/><rect x="0.5" y="7.5" width="5.3" height="5" fill="#fff" stroke="#2f78c2" stroke-width="1"/><rect x="0" y="7" width="6.3" height="1.6" fill="#2f78c2"/><rect x="7.5" y="3.5" width="6.5" height="6.5" fill="#d8e9f8" stroke="#3b8ad6" stroke-dasharray="1.4 1.2"/><path d="M9.5 6 L15.5 12" stroke="#2f78c2" stroke-width="1.6"/></svg>
<svg style="left:617px;top:121px" width="17" height="17" viewBox="0 0 17 17"><rect x="1" y="0.5" width="11.5" height="13" fill="#fff" stroke="#999" stroke-width="1"/><rect x="3.5" y="2.5" width="3.5" height="2.5" fill="none" stroke="#2f78c2" stroke-width="0.9"/><rect x="3.5" y="9.5" width="3.5" height="2.5" fill="none" stroke="#2f78c2" stroke-width="0.9"/><rect x="8.5" y="6" width="2.8" height="2.5" fill="none" stroke="#2f78c2" stroke-width="0.9"/><path d="M5.2 5 V9.5 M5.2 7.2 H8.5" stroke="#2f78c2" stroke-width="0.9"/><ellipse cx="12" cy="12.3" rx="4" ry="3" fill="#2f78c2"/><circle cx="12" cy="12.3" r="1.6" fill="#fff"/><circle cx="12" cy="12.3" r="0.8" fill="#2f78c2"/></svg>


</body></html>
